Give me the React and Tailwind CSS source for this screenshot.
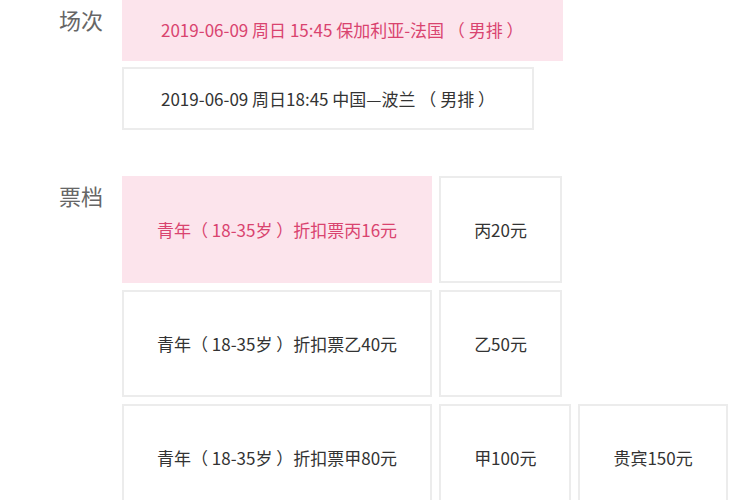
import React from 'react';

const sessions = [
  { text: '2019-06-09 周日 15:45 保加利亚-法国 （ 男排 ）', active: true },
  { text: '2019-06-09 周日18:45 中国—波兰 （ 男排 ）', active: false },
];

const tickets = [
  [
    { text: '青年（ 18-35岁 ）折扣票丙16元', active: true },
    { text: '丙20元' },
  ],
  [
    { text: '青年（ 18-35岁 ）折扣票乙40元' },
    { text: '乙50元' },
  ],
  [
    { text: '青年（ 18-35岁 ）折扣票甲80元' },
    { text: '甲100元' },
    { text: '贵宾150元' },
  ],
];

const Option = ({ text, active, className }) => (
  <div
    className={`flex items-center justify-center border-2 text-[17px] whitespace-pre ${
      active ? 'bg-[#fce4ec] text-[#d9436f] border-[#fce4ec]' : 'bg-white text-[#333] border-[#ececec]'
    } ${className}`}
  >
    {text}
  </div>
);

export default function App() {
  return (
    <div
      className="w-[750px] h-[500px] overflow-hidden bg-white"
      style={{ fontFamily: '"Noto Sans CJK SC", "Liberation Sans", sans-serif' }}
    >
      <div className="flex mt-[-2px]">
        <div className="w-[122px] shrink-0 pr-[19px] pt-[6px] text-right text-[22px] text-[#666] leading-[30px]">场次</div>
        <div className="flex flex-col items-start gap-[6px]">
          {sessions.map((s, i) => (
            <Option key={i} text={s.text} active={s.active} className="h-[63px] px-[37px]" />
          ))}
        </div>
      </div>

      <div className="flex mt-[46px]">
        <div className="w-[122px] shrink-0 pr-[19px] pt-[4px] text-right text-[22px] text-[#666] leading-[30px]">票档</div>
        <div className="flex flex-col gap-[7px]">
          {tickets.map((row, i) => (
            <div key={i} className="flex gap-[7px]">
              {row.map((t, j) => (
                <Option key={j} text={t.text} active={t.active} className="h-[107px] px-[33px]" />
              ))}
            </div>
          ))}
        </div>
      </div>
    </div>
  );
}
